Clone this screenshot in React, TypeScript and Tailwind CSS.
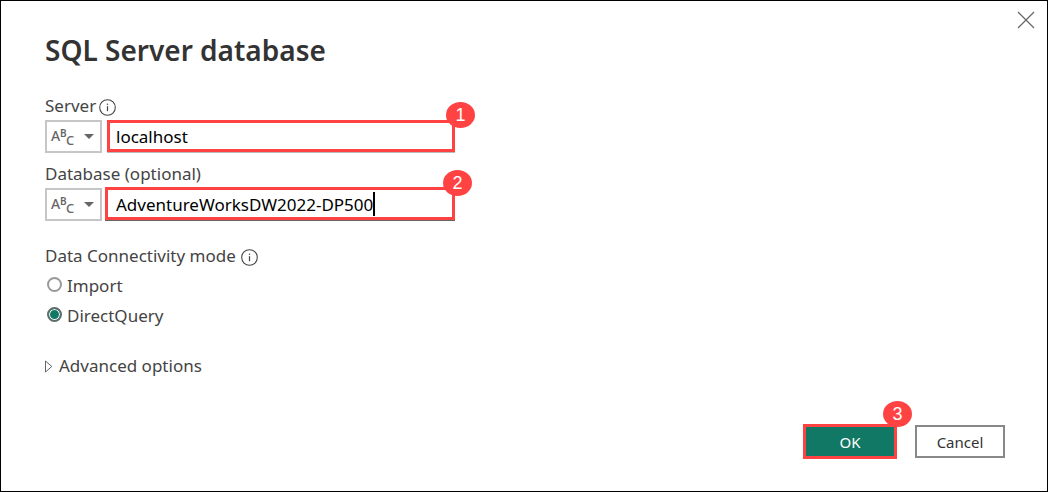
import { useState, type ReactNode } from "react";

function InfoIcon() {
  return (
    <svg className="mt-0.5 size-[17px] shrink-0" viewBox="0 0 17 17" fill="none" aria-hidden="true">
      <circle cx="8.5" cy="8.5" r="7.8" stroke="#444" strokeWidth="1.1" />
      <path d="M8.5 7.2V12.2" stroke="#444" strokeWidth="1.2" />
      <path d="M8.5 4.6V5.9" stroke="#444" strokeWidth="1.2" />
    </svg>
  );
}

function Badge({ children, className }: { children: ReactNode; className: string }) {
  return (
    <span
      className={`absolute z-10 flex h-[26px] w-[29px] items-center justify-center rounded-[50%] bg-[#ff4343] font-['Liberation_Sans',sans-serif] text-lg leading-none text-white ${className}`}
    >
      {children}
    </span>
  );
}

function TypePicker({ label }: { label: string }) {
  return (
    <div className="grid h-[33px] w-[57px] shrink-0">
      <select
        aria-label={label}
        className="col-start-1 row-start-1 appearance-none border-2 border-[#c6c6c6] bg-white text-transparent"
      >
        <option value="text" label=" " />
      </select>
      <div className="pointer-events-none col-start-1 row-start-1 flex items-center justify-between pr-2 pl-[6px] text-[#666]">
        <svg className="h-[27px] w-[25px] overflow-visible" viewBox="0 0 25 27" fill="currentColor" aria-hidden="true">
          <text x="0" y="18" fontSize="14" fontFamily="Noto Sans" fontWeight="500">A</text>
          <text x="9" y="14" fontSize="10" fontFamily="Noto Sans" fontWeight="600">B</text>
          <text x="15" y="22" fontSize="13" fontFamily="Noto Sans" fontWeight="500">C</text>
        </svg>
        <svg className="h-[5px] w-[10px]" viewBox="0 0 10 5" fill="currentColor" aria-hidden="true">
          <path d="M0 0H10L5 5Z" />
        </svg>
      </div>
    </div>
  );
}

function ModeOption({ label, checked, onSelect }: { label: string; checked: boolean; onSelect: () => void }) {
  return (
    <label className="flex h-[30px] items-center gap-[5px] pl-[2px]">
      <input
        type="radio"
        name="mode"
        checked={checked}
        onChange={onSelect}
        className="mb-1 size-[15px] appearance-none rounded-full border-2 border-[#999] bg-white checked:border-[#5b6e6a] checked:bg-[#117865] checked:shadow-[inset_0_0_0_1px_#fff]"
      />
      {label}
    </label>
  );
}

export default function App() {
  const [server, setServer] = useState("localhost");
  const [database, setDatabase] = useState("AdventureWorksDW2022-DP500");
  const [mode, setMode] = useState("DirectQuery");

  return (
    <main
      role="dialog"
      aria-labelledby="title"
      className="relative flex min-h-screen flex-col border border-black bg-white pt-[31px] pr-[42px] pb-[32px] pl-[44px] font-['Noto_Sans',sans-serif] text-[17px] leading-5 text-[#444]"
    >
      <button type="button" aria-label="Close" className="absolute top-[10px] right-[12px]">
        <svg className="size-[18px]" viewBox="0 0 18 18" stroke="#666" strokeWidth="1.2" aria-hidden="true">
          <path d="M1 1L17 17M17 1L1 17" />
        </svg>
      </button>

      <h1 id="title" className="text-[28px] leading-9 font-semibold text-[#333]">
        SQL Server database
      </h1>

      <div className="mt-7 flex h-5 items-center gap-[3px]">
        <label htmlFor="server">Server</label>
        <InfoIcon />
      </div>
      <div className="mt-1 flex w-[410px] max-w-full gap-[5px]">
        <TypePicker label="Server value type" />
        <div className="relative flex h-[32px] grow items-center border-3 border-[#ff4343] shadow-[0_1px_0_#bbb]">
          <input
            id="server"
            value={server}
            onChange={(e) => setServer(e.target.value)}
            className="w-full pt-[2px] pl-[6px] text-black outline-none"
          />
          <Badge className="-top-[21px] -right-[23px]">1</Badge>
        </div>
      </div>

      <div className="mt-[11px]">
        <label htmlFor="database">Database (optional)</label>
      </div>
      <div className="mt-[3px] flex h-[34px] w-[410px] max-w-full items-end gap-[3px]">
        <TypePicker label="Database value type" />
        <div className="relative flex h-[33px] grow items-center self-start border-3 border-[#ff4343] shadow-[0_1px_0_#666]">
          <input
            id="database"
            value={database}
            onChange={(e) => setDatabase(e.target.value)}
            className="field-sizing-content pt-[2px] pl-[8px] text-black outline-none"
          />
          <span className="h-6 w-[2px] bg-black" />
          <Badge className="-top-[20px] -right-[20px]">2</Badge>
        </div>
      </div>

      <fieldset className="mt-[25px]">
        <legend className="flex h-5 items-center gap-[5px]">
          Data Connectivity mode
          <InfoIcon />
        </legend>
        <div className="mt-[5px]">
          {["Import", "DirectQuery"].map((m) => (
            <ModeOption key={m} label={m} checked={mode === m} onSelect={() => setMode(m)} />
          ))}
        </div>
      </fieldset>

      <button type="button" aria-expanded="false" className="mt-[25px] flex items-center gap-[6px] self-start">
        <svg className="h-[13px] w-[8px]" viewBox="0 0 8 13" fill="none" stroke="#666" aria-hidden="true">
          <path d="M0.5 1V12L6.8 6.5Z" />
        </svg>
        Advanced options
      </button>

      <div className="mt-auto flex items-center justify-end gap-[18px] text-[15px]">
        <div className="relative">
          <button type="button" className="h-[35px] w-[94px] border-3 border-[#ff4343] bg-[#117865] text-white">
            OK
          </button>
          <Badge className="-top-[23px] -right-[15px]">3</Badge>
        </div>
        <button type="button" className="h-[33px] w-[90px] border-2 border-[#888] bg-white text-[#333]">
          Cancel
        </button>
      </div>
    </main>
  );
}
